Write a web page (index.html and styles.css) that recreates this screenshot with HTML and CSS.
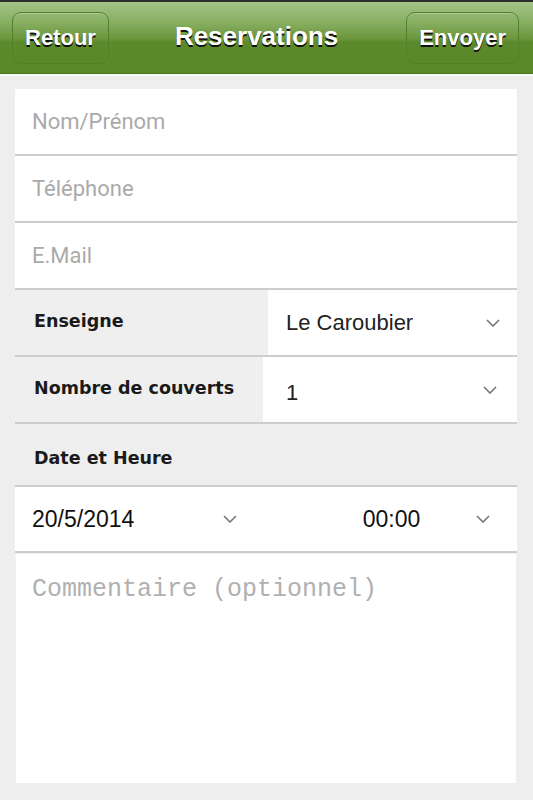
FILE: index.html
```html
<!DOCTYPE html>
<html lang="fr">

<head>
    <meta charset="UTF-8" />
    <meta name="viewport" content="width=device-width, initial-scale=1" />
    <title>Reservations</title>
    <link rel="stylesheet" href="styles.css">
</head>

<body>
    <header class="topbar">
        <a class="bar-btn" href="#">Retour</a>
        <h1 class="bar-title">Reservations</h1>
        <a class="bar-btn" href="#">Envoyer</a>
    </header>

    <main class="form">
        <div class="field"><input type="text" placeholder="Nom/Prénom" /></div>
        <div class="field"><input type="tel" placeholder="Téléphone" /></div>
        <div class="field"><input type="email" placeholder="E.Mail" /></div>

        <div class="pick-row">
            <label class="pick-label">Enseigne</label>
            <div class="pick">
                <span>Le Caroubier</span>
                <svg class="chevron" viewBox="0 0 14 8"><polyline points="1,1 7,7 13,1" /></svg>
            </div>
        </div>

        <div class="pick-row pick-row--narrow">
            <label class="pick-label">Nombre de couverts</label>
            <div class="pick">
                <span class="pick-num">1</span>
                <svg class="chevron" viewBox="0 0 14 8"><polyline points="1,1 7,7 13,1" /></svg>
            </div>
        </div>

        <div class="group-label">Date et Heure</div>

        <div class="datetime">
            <div class="pick pick--date">
                <span>20/5/2014</span>
                <svg class="chevron" viewBox="0 0 14 8"><polyline points="1,1 7,7 13,1" /></svg>
            </div>
            <div class="pick pick--time">
                <span>00:00</span>
                <svg class="chevron" viewBox="0 0 14 8"><polyline points="1,1 7,7 13,1" /></svg>
            </div>
        </div>

        <textarea class="comment" placeholder="Commentaire (optionnel)"></textarea>
    </main>
</body>

</html>
```

FILE: styles.css
```css
* {
    margin: 0;
    padding: 0;
    box-sizing: border-box;
}

body {
    font-family: 'Liberation Sans', Arial, sans-serif;
    background: #eeeeee;
    color: #222;
}

/* header bar */
.topbar {
    height: 74px;
    display: flex;
    align-items: center;
    justify-content: space-between;
    padding: 0 14px 0 12px;
    border-top: 2px solid #2e2e2e;
    border-bottom: 1px solid #4c781f;
    background: linear-gradient(180deg, #a4c389 0%, #86ad60 30%, #6a963b 52%, #5c8a2b 56%, #5a8828 100%);
    box-shadow: 0 2px 0 #f7f7f7;
}

.bar-btn {
    height: 52px;
    display: flex;
    align-items: center;
    padding: 0 12px;
    border: 1px solid #52802a;
    border-radius: 9px;
    box-shadow: inset 0 1px 0 rgba(255, 255, 255, 0.25);
    color: #fff;
    font-size: 22px;
    font-weight: 700;
    text-decoration: none;
    text-shadow: 0 2px 0 #111;
}

.bar-title {
    color: #fff;
    font-size: 26px;
    font-weight: 700;
    text-shadow: 0 2px 0 #111;
    margin: -2px 0 0 -2px;
}

/* form */
.form {
    padding: 15px 16px 0 15px;
}

.field {
    height: 67px;
    background: #fff;
    border-bottom: 2px solid #cdcdcd;
}

.field input {
    width: 100%;
    height: 100%;
    border: none;
    outline: none;
    background: transparent;
    padding: 0 17px;
    font-family: Roboto, 'Liberation Sans', sans-serif;
    font-size: 22px;
    color: #222;
}

.field input::placeholder {
    color: #aaaaaa;
}

.pick-row {
    height: 67px;
    display: flex;
    border-bottom: 2px solid #cdcdcd;
}

.pick-label {
    width: 253px;
    display: flex;
    align-items: center;
    padding-left: 19px;
    background: #efefef;
    font-family: 'DejaVu Sans', Verdana, sans-serif;
    font-size: 17.5px;
    font-weight: 700;
    color: #1a1a1a;
    padding-bottom: 4px;
}

.pick-row--narrow .pick-label {
    width: 248px;
}

.pick {
    flex: 1;
    display: flex;
    align-items: center;
    justify-content: space-between;
    background: #fff;
    padding: 0 17px 0 18px;
    font-size: 22px;
    color: #222;
}

.pick-row--narrow .pick {
    padding-left: 23px;
    padding-right: 20px;
}

.pick-num {
    margin-top: 6px;
}

.chevron {
    width: 14px;
    height: 8px;
    fill: none;
    stroke: #777;
    stroke-width: 1.6;
}

.group-label {
    height: 63px;
    display: flex;
    align-items: center;
    padding: 6px 0 0 19px;
    border-bottom: 2px solid #cdcdcd;
    font-family: 'DejaVu Sans', Verdana, sans-serif;
    font-size: 17.5px;
    font-weight: 700;
    color: #1a1a1a;
}

.datetime {
    height: 66px;
    display: grid;
    grid-template-columns: 251px 1fr;
    background: #fff;
    border-bottom: 2px solid #cdcdcd;
}

.pick--date {
    padding: 0 29px 0 17px;
    font-size: 23px;
    color: #111;
}

.pick--time {
    display: grid;
    grid-template-columns: 1fr auto 1fr;
    padding: 0;
    font-size: 23px;
    color: #111;
}

.pick--time::before {
    content: '';
}

.pick--time .chevron {
    justify-self: end;
    margin-right: 27px;
}

.comment {
    display: block;
    width: 100%;
    height: 231px;
    resize: none;
    outline: none;
    background: #fff;
    border: 1px solid #f0f0f0;
    padding: 21px 16px;
    font-family: 'Liberation Mono', 'Courier New', monospace;
    font-size: 25px;
    color: #222;
}

.comment::placeholder {
    color: #b0b0b0;
}
```
